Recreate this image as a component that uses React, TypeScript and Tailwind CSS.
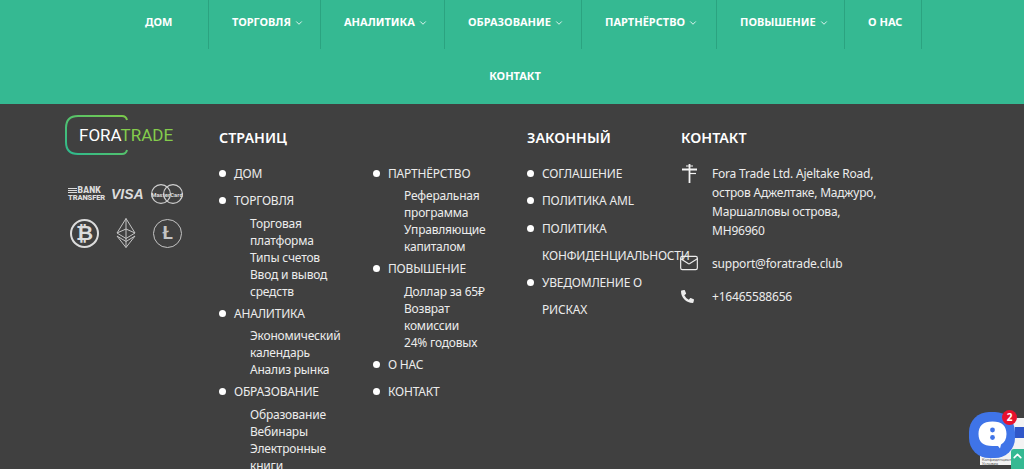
import { ChevronDown, Mail } from 'lucide-react';
import { FaPhoneAlt } from 'react-icons/fa';

type NavItem = { label: string; width: string; caret?: boolean };

const navItems: NavItem[] = [
  { label: 'ДОМ', width: 'w-[87px]' },
  { label: 'ТОРГОВЛЯ', width: 'w-[112px]', caret: true },
  { label: 'АНАЛИТИКА', width: 'w-[124px]', caret: true },
  { label: 'ОБРАЗОВАНИЕ', width: 'w-[137px]', caret: true },
  { label: 'ПАРТНЁРСТВО', width: 'w-[135px]', caret: true },
  { label: 'ПОВЫШЕНИЕ', width: 'w-[128px]', caret: true },
  { label: 'О НАС', width: 'w-[77px]' },
];

type PageLink = { label: string; sub?: string[] };

const pagesLeft: PageLink[] = [
  { label: 'ДОМ' },
  { label: 'ТОРГОВЛЯ', sub: ['Торговая платформа', 'Типы счетов', 'Ввод и вывод средств'] },
  { label: 'АНАЛИТИКА', sub: ['Экономический календарь', 'Анализ рынка'] },
  { label: 'ОБРАЗОВАНИЕ', sub: ['Образование', 'Вебинары', 'Электронные книги'] },
];

const pagesRight: PageLink[] = [
  { label: 'ПАРТНЁРСТВО', sub: ['Реферальная программа', 'Управляющие капиталом'] },
  { label: 'ПОВЫШЕНИЕ', sub: ['Доллар за 65₽', 'Возврат комиссии', '24% годовых'] },
  { label: 'О НАС' },
  { label: 'КОНТАКТ' },
];

const legal: PageLink[] = [
  { label: 'СОГЛАШЕНИЕ' },
  { label: 'ПОЛИТИКА AML' },
  { label: 'ПОЛИТИКА КОНФИДЕНЦИАЛЬНОСТИ' },
  { label: 'УВЕДОМЛЕНИЕ О РИСКАХ' },
];

function LinkList({ items, tight }: { items: PageLink[]; tight?: boolean }) {
  return (
    <ul className="w-[139px] ml-[15px]">
      {items.map((item) => (
        <li
          key={item.label}
          className={`relative text-[12px] tracking-[-0.2px] text-[#ececec] ${tight ? 'leading-[27.3px]' : 'leading-[27.4px]'}`}
        >
          <span className="absolute left-[-15px] top-[10px] w-[7px] h-[7px] rounded-full bg-white" />
          {item.label}
          {item.sub && (
            <ul className="pl-[16px] w-[112px]">
              {item.sub.map((s) => (
                <li key={s} className="leading-[17px]">{s}</li>
              ))}
            </ul>
          )}
        </li>
      ))}
    </ul>
  );
}

function Logo() {
  return (
    <div className="relative w-[110px] h-[40px]">
      <svg width="110" height="40" viewBox="0 0 110 40" fill="none" className="absolute left-0 top-0">
        <defs>
          <linearGradient id="logoGrad" x1="0" y1="1" x2="1" y2="0">
            <stop offset="0" stopColor="#2cb98f" />
            <stop offset="1" stopColor="#7ccb4a" />
          </linearGradient>
        </defs>
        <path d="M62 5 Q61 1 57 1 H13 Q1 1 1 13 V27 Q1 39 13 39 H57 Q61 39 62 35" stroke="url(#logoGrad)" strokeWidth="2" />
      </svg>
      <div className="absolute left-[14px] top-[9px] text-[17px] leading-[22px] font-['Roboto',sans-serif] whitespace-nowrap text-white">
        FORA<span className="text-[#84cc4c]">TRADE</span>
      </div>
    </div>
  );
}

function PaymentIcons() {
  return (
    <div className="mt-[29px] flex flex-col gap-[14px] text-[#dcdcdc]">
      <div className="flex items-center">
        <div className="w-[33px] ml-[3px] font-['Roboto',sans-serif] font-black whitespace-nowrap">
          <div className="flex items-center h-[7px]">
            <div className="flex flex-col gap-[1px] w-[9px] mr-[1px]">
              <span className="h-[1px] bg-[#dcdcdc]" />
              <span className="h-[1px] bg-[#dcdcdc]" />
              <span className="h-[1px] bg-[#dcdcdc]" />
            </div>
            <span className="text-[8.5px] leading-[7px] tracking-[0.2px]">BANK</span>
          </div>
          <div className="text-[7.5px] leading-[7px] tracking-[-0.1px]">TRANSFER</div>
        </div>
        <div className="ml-[10px] w-[30px] text-[14px] leading-none font-['Liberation_Sans',sans-serif] font-bold italic">VISA</div>
        <div className="relative ml-[10px] w-[32px] h-[20px]">
          <svg width="32" height="20" viewBox="0 0 32 20" fill="none" stroke="#cfcfcf" strokeWidth="1.2" className="absolute left-0 top-0">
            <circle cx="10" cy="10" r="9.4" />
            <circle cx="22" cy="10" r="9.4" />
          </svg>
          <span className="absolute inset-0 flex items-center justify-center font-['Roboto',sans-serif] text-[6px] font-bold whitespace-nowrap">MasterCard</span>
        </div>
      </div>
      <div className="flex items-center">
        <div className="ml-[5px] w-[29px] h-[29px] rounded-full border-2 border-[#dcdcdc] flex items-center justify-center text-[21px] font-bold font-['Liberation_Sans',sans-serif]">
          ₿
        </div>
        <svg width="20" height="30" viewBox="0 0 20 30" fill="none" stroke="#c4c4c4" strokeWidth="1" className="ml-[17px]">
          <path d="M10 0.5 L1 15 L10 20.5 L19 15 Z" />
          <path d="M1 15 L10 11 L19 15 M10 0.5 V29.5 M1 18 L10 29.5 L19 18 L10 23.5 Z" />
        </svg>
        <div className="ml-[17px] w-[29px] h-[29px] rounded-full border border-[#c4c4c4] flex items-center justify-center text-[19px] font-bold font-['Roboto',sans-serif] text-[#c4c4c4]">
          Ł
        </div>
      </div>
    </div>
  );
}

function Signpost() {
  return (
    <svg width="17" height="19" viewBox="0 0 17 19" fill="none" stroke="#f4f4f4">
      <path d="M8.5 0 V19" strokeWidth="1.8" />
      <path d="M5 2 H12" strokeWidth="1" />
      <path d="M1 5.5 H16" strokeWidth="2" />
      <path d="M8.5 9.5 H15" strokeWidth="1.2" />
    </svg>
  );
}

function Heading({ children }: { children: string }) {
  return <h3 className="text-[14.3px] leading-[20px] font-semibold text-white font-['Noto_Sans',sans-serif]">{children}</h3>;
}

export default function App() {
  return (
    <div className="relative w-[1024px] h-[469px] overflow-hidden bg-[#404040] font-['Noto_Sans',sans-serif]">
      {/* Top nav */}
      <nav className="h-[104px] bg-[#35b992] text-white text-[11px] font-bold">
        <ul className="flex pl-[122px]">
          {navItems.map((item) => (
            <li key={item.label} className={`${item.width} h-[49px] border-r border-[#2ba380] flex items-center pl-[23px] pb-[5px]`}>
              {item.label}
              {item.caret && <ChevronDown size={10} strokeWidth={2} className="ml-[3px] mt-[2px]" />}
            </li>
          ))}
        </ul>
        <div className="h-[55px] flex items-center justify-center">
          <span className="pb-[1px] ml-[6px]">КОНТАКТ</span>
        </div>
      </nav>

      {/* Footer */}
      <footer className="flex pl-[65px] pt-[11px]">
        <div className="w-[154px]">
          <Logo />
          <PaymentIcons />
        </div>
        <div className="w-[308px] pt-[13px]">
          <Heading>СТРАНИЦ</Heading>
          <div className="flex mt-[12px]">
            <div className="w-[154px]"><LinkList items={pagesLeft} /></div>
            <div className="w-[154px]"><LinkList items={pagesRight} /></div>
          </div>
        </div>
        <div className="w-[154px] pt-[13px]">
          <Heading>ЗАКОННЫЙ</Heading>
          <div className="mt-[12px]"><LinkList items={legal} tight /></div>
        </div>
        <div className="w-[200px] pt-[13px] relative">
          <Heading>КОНТАКТ</Heading>
          <div className="mt-[16px] flex flex-col gap-[14px] text-[12px] tracking-[-0.2px] leading-[19px] text-[#ececec]">
            <div className="flex mb-[-1px]">
              <div className="w-[31px] shrink-0"><Signpost /></div>
              <p className="w-[170px] shrink-0">Fora Trade Ltd. Ajeltake Road, остров Аджелтаке, Маджуро, Маршалловы острова, MH96960</p>
            </div>
            <div className="flex items-center">
              <div className="w-[31px] shrink-0"><Mail size={20} strokeWidth={1.4} className="ml-[-2px]" /></div>
              <p>support@foratrade.club</p>
            </div>
            <div className="flex items-center">
              <div className="w-[31px] shrink-0"><FaPhoneAlt size={13} /></div>
              <p>+16465588656</p>
            </div>
          </div>
        </div>
      </footer>

      {/* reCAPTCHA badge behind the chat */}
      <div className="absolute left-[980px] top-[418px] w-[44px] h-[47px] bg-[#f3f3f3] overflow-hidden">
        <div className="absolute right-0 top-[9px] w-[9px] h-[11px] bg-[#2f56c8]" />
        <div className="absolute left-[2px] top-[40px] text-[4px] leading-[3.5px] text-[#555] whitespace-nowrap">
          Конфиденциальность
          <br />
          Условия
        </div>
      </div>

      {/* Chat widget */}
      <div className="absolute left-[969px] top-[412px] w-[46px] h-[46px] rounded-[20px] bg-[#3f74e8] flex items-center justify-center">
        <svg width="29" height="28" viewBox="0 0 29 28">
          <path d="M14.5 0.5 C5 0.5 0.5 5 0.5 13 C0.5 21 5 25 14.5 25 L20 25 L22 27.5 L23 23.5 C26.5 21.5 28.5 18 28.5 13 C28.5 5 24 0.5 14.5 0.5 Z" fill="#fff" />
          <circle cx="14.5" cy="9" r="2.4" fill="#3f74e8" />
          <circle cx="14.5" cy="16.5" r="2.4" fill="#3f74e8" />
        </svg>
      </div>
      <div className="absolute left-[1002px] top-[410px] w-[15px] h-[15px] rounded-full bg-[#e8112d] text-white text-[10px] font-bold flex items-center justify-center">
        2
      </div>

      {/* Back to top */}
      <div className="absolute left-[1011px] top-[449px] w-[13px] h-[20px] bg-[#35b992] rounded-tl-[3px] flex items-start justify-center">
        <ChevronDown size={14} strokeWidth={3} className="rotate-180 text-white" />
      </div>
    </div>
  );
}
